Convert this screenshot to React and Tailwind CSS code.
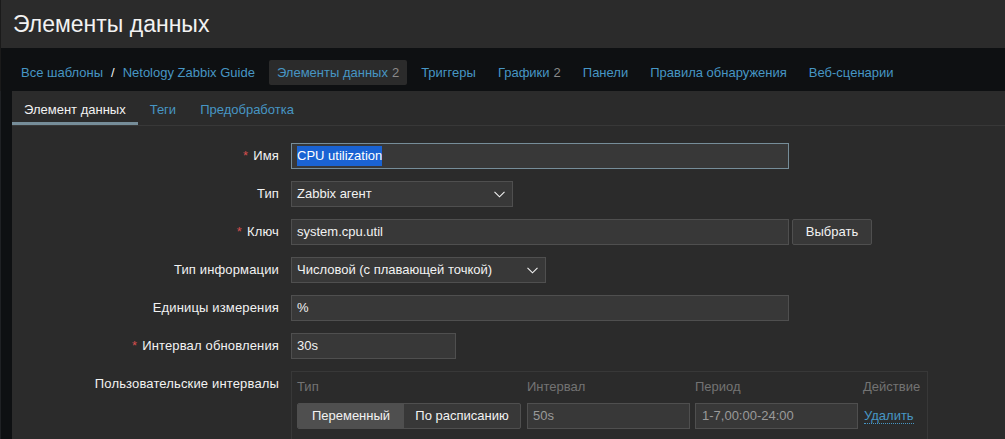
import React from "react";

const Chevron = () => (
  <svg width="11" height="7" viewBox="0 0 11 7" className="shrink-0">
    <polyline points="0.5,0.8 5.5,5.8 10.5,0.8" fill="none" stroke="#f2f2f2" strokeWidth="1.1" />
  </svg>
);

const Label = ({ req, children, top }) => (
  <div className={`w-[279px] shrink-0 pr-[12px] text-right text-[13px] tracking-[0.15px] text-[#f2f2f2] ${top ? "pt-[3px]" : ""}`}>
    {req && <span className="text-[#d64e4e] mr-[5px]">*</span>}
    {children}
  </div>
);

const Input = ({ w, children, focus }) => (
  <div
    className={`${w} h-[26px] flex items-center px-[5px] bg-[#383838] border text-[13px] text-[#f2f2f2] ${
      focus ? "border-[#768d99]" : "border-[#4f4f4f]"
    }`}
  >
    {children}
  </div>
);

const Select = ({ w, children }) => (
  <div className={`${w} h-[26px] flex items-center justify-between pl-[5px] pr-[7px] bg-[#383838] border border-[#4f4f4f] text-[13px] text-[#f2f2f2]`}>
    <span>{children}</span>
    <Chevron />
  </div>
);

export default function App() {
  return (
    <div className="w-[1005px] h-[439px] overflow-hidden bg-[#0e1012] font-['Liberation_Sans',Arial,sans-serif]">
      <div className="h-[48px] bg-[#2b2b2b] border-l border-[#1a1a1a] flex items-center pl-[12px] text-[23px] text-[#f2f2f2]">
        Элементы данных
      </div>
      <div className="h-[43px] flex items-start pt-[12px] pl-[12px] text-[13px] border-l border-[#1a1a1a]">
        <span className="px-[8px] h-[25px] flex items-center text-[#4796c4]">Все шаблоны</span>
        <span className="h-[25px] flex items-center text-[#f2f2f2]">/</span>
        <span className="px-[8px] h-[25px] flex items-center text-[#4796c4]">Netology Zabbix Guide</span>
        <div className="flex items-center gap-[6px] ml-[6px]">
          <span className="px-[8px] h-[25px] flex items-center bg-[#2b2b2b] rounded-[2px] text-[#4796c4]">
            Элементы данных<span className="text-[#8a8a8a] ml-[4px]">2</span>
          </span>
          <span className="px-[8px] text-[#4796c4]">Триггеры</span>
          <span className="px-[8px] text-[#4796c4]">
            Графики<span className="text-[#8a8a8a] ml-[4px]">2</span>
          </span>
          <span className="px-[8px] text-[#4796c4]">Панели</span>
          <span className="px-[8px] text-[#4796c4]">Правила обнаружения</span>
          <span className="px-[8px] text-[#4796c4]">Веб-сценарии</span>
        </div>
      </div>
      <div className="flex h-full">
        <div className="w-[12px] shrink-0 border-l border-[#1f2124]" />
        <div className="flex-1 bg-[#2b2b2b]">
          <div className="h-[35px] flex items-stretch border-b border-[#383838] text-[13px]">
            <div className="px-[12px] flex items-center text-[#f2f2f2] border-b-[3px] border-[#768d99] pt-[6px]">Элемент данных</div>
            <div className="px-[12px] flex items-center text-[#4796c4] pt-[3px]">Теги</div>
            <div className="px-[12px] flex items-center text-[#4796c4] pt-[3px]">Предобработка</div>
          </div>
          <div className="pt-[17px] flex flex-col gap-[12px]">
            <div className="flex items-center">
              <Label req>Имя</Label>
              <Input w="w-[498px]" focus>
                <span className="bg-[#1a63d3] text-white">CPU utilization</span>
              </Input>
            </div>
            <div className="flex items-center">
              <Label>Тип</Label>
              <Select w="w-[222px]">Zabbix агент</Select>
            </div>
            <div className="flex items-center">
              <Label req>Ключ</Label>
              <Input w="w-[498px]">system.cpu.util</Input>
              <div className="ml-[3px] w-[80px] h-[26px] flex items-center justify-center bg-[#383838] border border-[#4f4f4f] rounded-[2px] text-[13px] text-[#f2f2f2]">
                Выбрать
              </div>
            </div>
            <div className="flex items-center">
              <Label>Тип информации</Label>
              <Select w="w-[255px]">Числовой (с плавающей точкой)</Select>
            </div>
            <div className="flex items-center">
              <Label>Единицы измерения</Label>
              <Input w="w-[498px]">%</Input>
            </div>
            <div className="flex items-center">
              <Label req>Интервал обновления</Label>
              <Input w="w-[165px]">30s</Input>
            </div>
            <div className="flex items-start">
              <Label top>Пользовательские интервалы</Label>
              <div className="w-[637px] border border-[#383838] pl-[5px] pt-[6px] pb-[10px]">
                <div className="flex text-[13px] text-[#737373] h-[18px] items-center">
                  <div className="w-[230px]">Тип</div>
                  <div className="w-[168px]">Интервал</div>
                  <div className="w-[168px]">Период</div>
                  <div>Действие</div>
                </div>
                <div className="flex items-center mt-[7px] text-[13px]">
                  <div className="w-[224px] h-[26px] flex bg-[#383838] border border-[#4f4f4f] rounded-[2px] overflow-hidden">
                    <div className="w-[106px] flex items-center justify-center bg-[#4f4f4f] text-[#f2f2f2]">Переменный</div>
                    <div className="flex-1 flex items-center justify-center text-[#f2f2f2]">По расписанию</div>
                  </div>
                  <div className="ml-[6px] w-[163px] h-[26px] flex items-center px-[5px] bg-[#383838] border border-[#4f4f4f] text-[#9a9a9a]">50s</div>
                  <div className="ml-[5px] w-[163px] h-[26px] flex items-center px-[6px] bg-[#383838] border border-[#4f4f4f] text-[#9a9a9a]">1-7,00:00-24:00</div>
                  <span className="ml-[6px] text-[#4796c4] border-b border-dotted border-[#4796c4] leading-[15px]">Удалить</span>
                </div>
              </div>
            </div>
          </div>
        </div>
      </div>
    </div>
  );
}
